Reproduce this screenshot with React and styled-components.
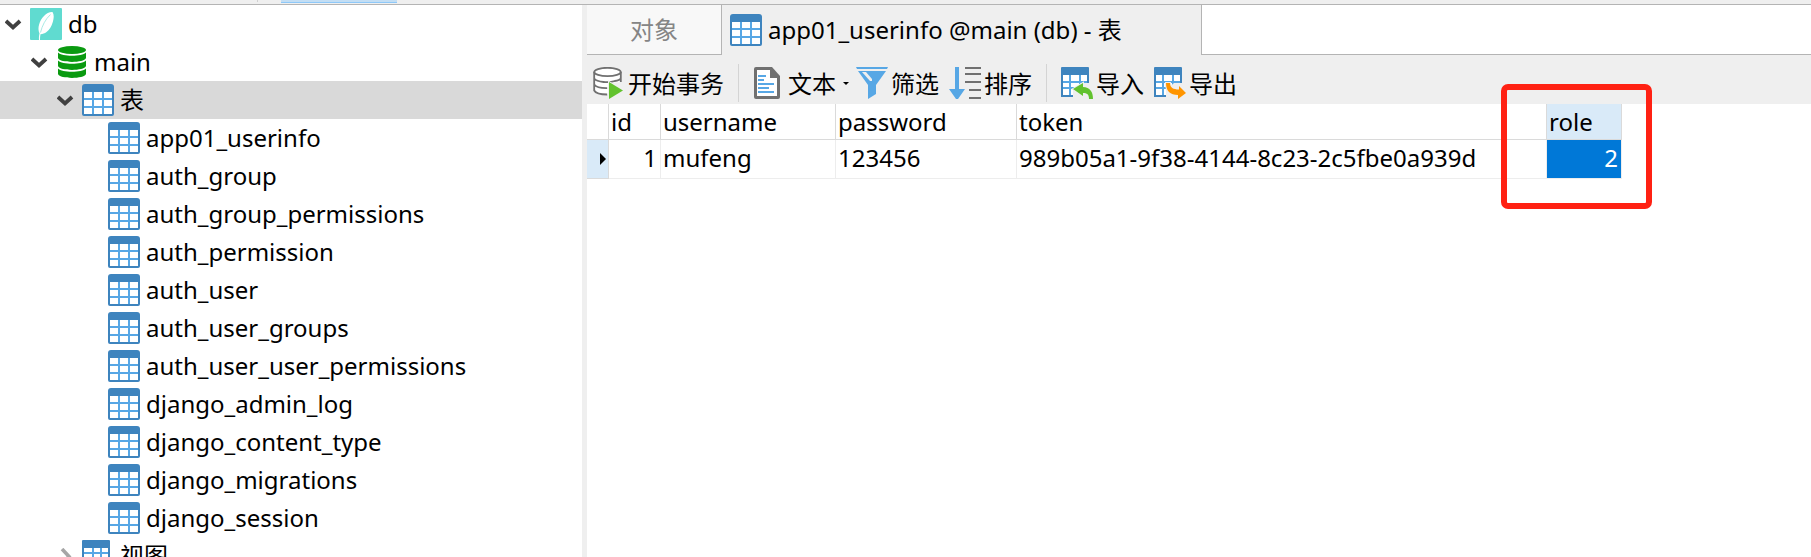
import React, { useState } from 'react'
import styled, { createGlobalStyle, css } from 'styled-components'

const GlobalStyle = createGlobalStyle`
  *{
    box-sizing:border-box;
  }
  body{
    margin:0;
    overflow:hidden;
    background-color:white;
    color:black;
    font-family:"Noto Sans", "Noto Sans CJK SC", sans-serif;
    font-size:24px;
    line-height:32px;
  }
  button{
    border:none;
    padding:0;
    background:none;
    color:inherit;
    font:inherit;
    cursor:pointer;
  }
`

const Page = styled.div`
  height:100vh;
  display:flex;
  flex-direction:column;
`
const TopStrip = styled.div`
  flex:none;
  height:5px;
  display:flex;
  gap:23px;
  padding-left:257px;
  background-color:#efefef;
  border-bottom:1px solid #b4b4b4;
`
const StripLine = styled.div`
  width:1px;
  height:2px;
  background-color:#d0d0d0;
`
const StripActive = styled.div`
  width:116px;
  height:3px;
  background-color:#c3def4;
  border-bottom:1px solid #8ec8f8;
`
const Body = styled.div`
  flex:1;
  min-height:0;
  display:flex;
`

const Sidebar = styled.nav`
  flex:none;
  width:587px;
  overflow:hidden;
  border-right:5px solid #efefef;
`
const Tree = styled.ul`
  list-style:none;
  margin:0;
  padding:0;
`
const TreeRow = styled.button`
  width:100%;
  height:38px;
  display:flex;
  align-items:center;
  padding-left:${props => 5 + props.$level * 26}px;
  background-color:${props => props.$selected ? '#d9d9d9' : 'transparent'};
  text-align:left;
`
const Arrow = styled.span`
  width:17px;
  height:17px;
  margin-right:8px;
  display:flex;
`
const TreeLabel = styled.span`
  margin-left:6px;
`

const Main = styled.main`
  flex:1;
  min-width:0;
  display:flex;
  flex-direction:column;
`
const TabBar = styled.div`
  flex:none;
  height:50px;
  display:flex;
`
const Tab = styled.button`
  display:flex;
  align-items:center;
  gap:6px;
  background-color:#efefef;
  ${props => props.$active ? css`
    min-width:479px;
    padding:0 8px;
  ` : css`
    padding:0 43px;
    color:#858585;
    background-color:#f8f8f8;
    border-right:1px solid #b4b4b4;
    border-bottom:1px solid #b4b4b4;
  `}
`
const TabFill = styled.div`
  flex:1;
  border-left:1px solid #b4b4b4;
  border-bottom:1px solid #b4b4b4;
`

const Toolbar = styled.div`
  flex:none;
  height:49px;
  display:flex;
  align-items:center;
  gap:10px;
  padding:7px 6px 0;
  background-color:#efefef;
`
const Tool = styled.button`
  display:flex;
  align-items:center;
  gap:3px;
  white-space:nowrap;
`
const ToolLabel = styled.span`
  padding-top:2px;
`
const Divider = styled.div`
  width:1px;
  height:38px;
  margin:0 4px;
  background-color:#d4d4d4;
`
const Caret = styled.span`
  margin:0 -3px 0 4px;
  border:3px solid transparent;
  border-top-color:black;
  border-bottom:none;
`

const Grid = styled.table`
  align-self:flex-start;
  table-layout:fixed;
  width:1035px;
  border-collapse:separate;
  border-spacing:0;
`
const Head = styled.th`
  position:relative;
  width:${props => props.$width}px;
  height:36px;
  padding:0 2px;
  text-align:left;
  font-weight:400;
  background-color:${props => props.$active ? '#d9eaf8' : 'white'};
  border-right:1px solid #dadada;
  border-bottom:1px solid #dadada;
`
const Cell = styled.td`
  height:39px;
  padding:0 3px 2px 2px;
  text-align:${props => props.$right ? 'right' : 'left'};
  white-space:nowrap;
  border-right:1px solid #ededed;
  border-bottom:1px solid #ededed;
  ${props => props.$selected && css`
    color:white;
    background-color:#0078d7;
    background-clip:padding-box;
  `}
`
const Marker = styled.td`
  padding:0 2px 0 0;
  background-color:#d9eaf8;
  border-right:1px solid #dadada;
  border-bottom:1px solid #dadada;
`
const MarkerArrow = styled.div`
  width:6px;
  margin-left:auto;
  border:6px solid transparent;
  border-left-color:black;
  border-right:none;
`
const Highlight = styled.div`
  position:absolute;
  inset:-20px -31px -70px -46px;
  border:6px solid #ff2113;
  border-radius:7px;
  pointer-events:none;
`

const TableIcon = () => (
  <svg width="32" height="32" viewBox="0 0 32 32" aria-hidden="true">
    <path d="M3 0h26a3 3 0 0 1 3 3v27a2 2 0 0 1-2 2H2a2 2 0 0 1-2-2V3a3 3 0 0 1 3-3z" fill="#3e84be" />
    <path d="M2 8h28v22H2z" fill="#57a7e5" />
    <path d="M2 8h8v6H2zM12 8h8v6h-8zM22 8h8v6h-8zM2 16h8v6H2zM12 16h8v6h-8zM22 16h8v6h-8zM2 24h8v6H2zM12 24h8v6h-8zM22 24h8v6h-8z" fill="white" />
  </svg>
)

const ViewIcon = () => (
  <svg width="32" height="32" viewBox="0 0 32 32" aria-hidden="true">
    <path d="M1 0h26a1 1 0 0 1 1 1v29H0V1a1 1 0 0 1 1-1z" fill="#3e84be" />
    <path d="M2 8h24v20H2z" fill="#57a7e5" />
    <path d="M2 8h8v4H2zM12 8h6v4h-6zM20 8h6v4h-6zM2 14h8v6H2zM12 14h6v6h-6zM20 14h6v6h-6zM2 22h8v6H2zM12 22h14v6H12z" fill="white" />
  </svg>
)

const SqliteIcon = () => (
  <svg width="32" height="32" viewBox="0 0 32 32" aria-hidden="true">
    <rect width="32" height="32" rx="1" fill="#60dbd0" />
    <path d="M9 32c-.2-2.500 0-4.500.5-6.500C7 20 9.500 12.500 14 8c2.500-2.600 5.500-4.200 8.500-4 1.800 2.500 1.400 6.500.3 10-1.300 4.500-3.500 8-6.300 10-1.800 1.400-3.800 2-6 2.300-.4 1.700-.5 3.500-.5 5.700z" fill="white" />
    <path d="M10.500 24.500C12 18 15.500 11 20.500 6.500" fill="none" stroke="#a9ebe5" strokeWidth="1" />
  </svg>
)

const SchemaIcon = () => (
  <svg width="32" height="32" viewBox="0 0 32 32" aria-hidden="true">
    <g fill="#0a9a10">
      <ellipse cx="16" cy="4" rx="14" ry="4" />
      <path d="M2 6.500c4 4.400 24 4.400 28 0V12c-2 5.200-26 5.200-28 0z" />
      <path d="M2 14.500c4 4.400 24 4.400 28 0V20c-2 5.200-26 5.200-28 0z" />
      <path d="M2 22.500c4 4.400 24 4.400 28 0V28c-2 5.200-26 5.200-28 0z" />
    </g>
  </svg>
)

const ArrowDown = () => (
  <svg width="17" height="17" viewBox="0 0 17 17" aria-hidden="true">
    <path d="M1 5l7 6.500L15 5" fill="none" stroke="#404040" strokeWidth="3.800" />
  </svg>
)

const ArrowRight = () => (
  <svg width="17" height="17" viewBox="0 0 17 17" aria-hidden="true">
    <path d="M5 1l7 7.500L5 16" fill="none" stroke="#a6a6a6" strokeWidth="3.600" />
  </svg>
)

const TransactionIcon = () => (
  <svg width="32" height="32" viewBox="0 0 32 32" aria-hidden="true">
    <path d="M1 5v18.500C3 27 9 28 15 27.700V16l13-1V5z" fill="white" />
    <g fill="none" stroke="#707070" strokeWidth="1.800">
      <ellipse cx="14.500" cy="5" rx="13.300" ry="4.200" fill="white" />
      <path d="M1.200 5v18.500c1.600 3 7 4 13 4M27.800 5v10M1.200 11.500c3 4 15 4.500 20.500 2.500 3-.5 5.500-1.500 6.100-2.500M1.200 17.500c2 2.800 8 3.800 13 3.700" />
    </g>
    <path d="M16 15l14 8.500L16 32z" fill="#62c22e" stroke="#efefef" strokeWidth="2" paintOrder="stroke" />
  </svg>
)

const TextIcon = () => (
  <svg width="32" height="32" viewBox="0 0 32 32" aria-hidden="true">
    <path d="M3 0h16l8 9v21a2 2 0 0 1-2 2H3a2 2 0 0 1-2-2V2a2 2 0 0 1 2-2z" fill="#707070" />
    <path d="M4 3h13v8h7v18H4z" fill="white" />
    <path d="M5 8h8v2H5zM5 12h6v2H5zM5 16h16v2H5zM5 20h11v2H5zM5 24h16v2H5z" fill="#57a7e5" />
  </svg>
)

const FilterIcon = () => (
  <svg width="32" height="32" viewBox="0 0 32 32" aria-hidden="true">
    <path d="M0 0h32L31 2H1zM2 4h28L20 18v9l-8 5V18z" fill="#57a7e5" />
    <path d="M6 5h4l6 7v2h-2z" fill="#efefef" />
  </svg>
)

const SortIcon = () => (
  <svg width="32" height="32" viewBox="0 0 32 32" aria-hidden="true">
    <path d="M6 0h4v22h6l-7 10H7L0 22h6z" fill="#57a7e5" />
    <path d="M16 0h16v2H16zM16 6h16v2H16zM16 14h16v2H16zM20 22h12v2H20zM20 30h12v2H20z" fill="#707070" />
  </svg>
)

const TransferIcon = ({ out }) => (
  <svg width="32" height="32" viewBox="0 0 32 32" aria-hidden="true">
    <path d="M1 0h26a1 1 0 0 1 1 1v29H0V1a1 1 0 0 1 1-1z" fill="#3e84be" />
    <path d="M2 8h24v20H2z" fill="#57a7e5" />
    <path d="M2 8h6v6H2zM10 8h8v6h-8zM20 8h6v6h-6zM2 16h6v4H2zM10 16h8v4h-8zM20 16h6v4h-6zM2 22h6v6H2zM10 22h2v6h-2z" fill="white" />
    <path d="M12 23l8-7h8v16H12z" fill="#efefef" />
    {out
      ? <path d="M12 16h4c0 4.500 3 6.500 9 6.500V19l7 7-8 6v-4C16 28 12 24 12 16z" fill="#ff9500" stroke="#efefef" strokeWidth="2" paintOrder="stroke" />
      : <path d="M12 22l10-6v4c7 .5 10 4.500 10 12h-4c0-4.500-2-6-6-6v3z" fill="#62c22e" stroke="#efefef" strokeWidth="2" paintOrder="stroke" />}
  </svg>
)

const tables = [
  'app01_userinfo',
  'auth_group',
  'auth_group_permissions',
  'auth_permission',
  'auth_user',
  'auth_user_groups',
  'auth_user_user_permissions',
  'django_admin_log',
  'django_content_type',
  'django_migrations',
  'django_session',
]

const TreeItem = ({ level, icon, label, arrow, selected, onClick, children }) => (
  <li>
    <TreeRow type="button" $level={level} $selected={selected} onClick={onClick}>
      <Arrow>{arrow}</Arrow>
      {icon}
      <TreeLabel>{label}</TreeLabel>
    </TreeRow>
    {children && <Tree>{children}</Tree>}
  </li>
)

const App = () => {
  const [open, setOpen] = useState(true)

  return (
    <Page>
      <GlobalStyle />
      <TopStrip>
        <StripLine />
        <StripActive />
      </TopStrip>
      <Body>
        <Sidebar>
          <Tree>
            <TreeItem level={0} icon={<SqliteIcon />} label="db" arrow={<ArrowDown />}>
              <TreeItem level={1} icon={<SchemaIcon />} label="main" arrow={<ArrowDown />}>
                <TreeItem
                  level={2}
                  icon={<TableIcon />}
                  label="表"
                  selected
                  arrow={open ? <ArrowDown /> : <ArrowRight />}
                  onClick={() => setOpen(!open)}
                >
                  {open && tables.map(name => (
                    <TreeItem key={name} level={3} icon={<TableIcon />} label={name} />
                  ))}
                </TreeItem>
                <TreeItem level={2} icon={<ViewIcon />} label="视图" arrow={<ArrowRight />} />
              </TreeItem>
            </TreeItem>
          </Tree>
        </Sidebar>
        <Main>
          <TabBar>
            <Tab type="button">对象</Tab>
            <Tab type="button" $active>
              <TableIcon />
              app01_userinfo @main (db) - 表
            </Tab>
            <TabFill />
          </TabBar>
          <Toolbar>
            <Tool type="button"><TransactionIcon /><ToolLabel>开始事务</ToolLabel></Tool>
            <Divider />
            <Tool type="button"><TextIcon /><ToolLabel>文本</ToolLabel><Caret /></Tool>
            <Tool type="button"><FilterIcon /><ToolLabel>筛选</ToolLabel></Tool>
            <Tool type="button"><SortIcon /><ToolLabel>排序</ToolLabel></Tool>
            <Divider />
            <Tool type="button"><TransferIcon /><ToolLabel>导入</ToolLabel></Tool>
            <Tool type="button"><TransferIcon out /><ToolLabel>导出</ToolLabel></Tool>
          </Toolbar>
          <Grid>
            <thead>
              <tr>
                <Head $width={22} />
                <Head $width={52}>id</Head>
                <Head $width={175}>username</Head>
                <Head $width={181}>password</Head>
                <Head $width={530}>token</Head>
                <Head $width={75} $active>
                  role
                  <Highlight />
                </Head>
              </tr>
            </thead>
            <tbody>
              <tr>
                <Marker><MarkerArrow /></Marker>
                <Cell $right>1</Cell>
                <Cell>mufeng</Cell>
                <Cell>123456</Cell>
                <Cell>989b05a1-9f38-4144-8c23-2c5fbe0a939d</Cell>
                <Cell $right $selected>2</Cell>
              </tr>
            </tbody>
          </Grid>
        </Main>
      </Body>
    </Page>
  )
}

export default App
